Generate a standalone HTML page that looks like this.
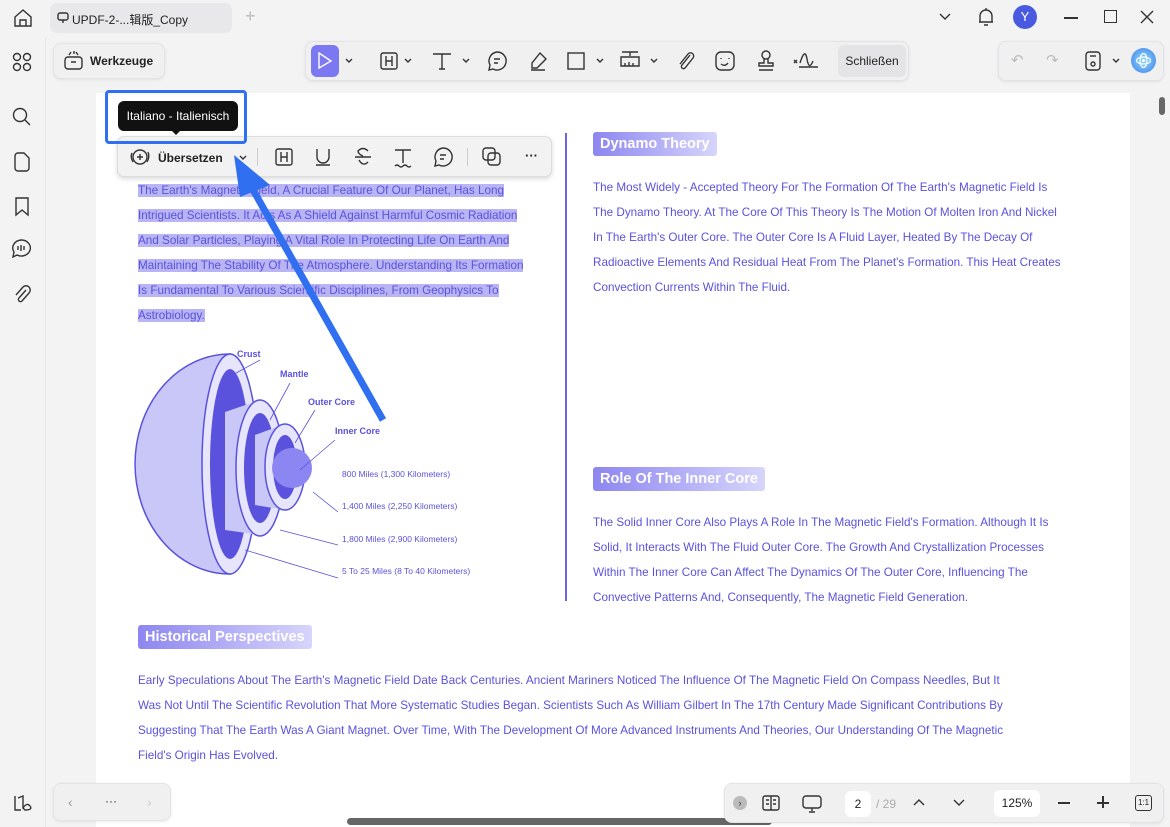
<!DOCTYPE html>
<html><head><meta charset="utf-8"><style>
*{box-sizing:border-box;margin:0;padding:0}
body{width:1170px;height:827px;overflow:hidden;background:#f3f3f4;font-family:"Liberation Sans","Noto Sans CJK SC",sans-serif;position:relative}
.a{position:absolute}
.t{color:#5a52dc;font-size:11.7px;line-height:25px;white-space:nowrap}
.hl span{background:#b9b5f4}
.h{background:linear-gradient(90deg,#8d86f0,#d7d5fb);color:#fff;font-weight:bold;font-size:14.5px;padding:4px 7px;border-radius:3px}
svg{overflow:visible}
.ic{stroke:#333;fill:none;stroke-width:1.4}
.tb{background:#f0f0f1;border:1px solid #e3e3e5;border-radius:8px;box-shadow:0 1px 3px rgba(0,0,0,.08)}
</style></head><body>
<svg class="a" style="left:13px;top:8px" width="20" height="20"><path class="ic" d="M2 9 L10 2 L18 9 V18 H2 Z M7 18 V12 H13 V18"/></svg>
<div class="a" style="left:50px;top:3px;width:182px;height:30px;background:#e8e8ea;border-radius:7px;font-size:12px;color:#222;padding:8px 0 0 22px">UPDF-2-...辑版_Copy</div>
<svg class="a" style="left:57px;top:12px" width="12" height="12"><rect class="ic" x="1" y="1" width="10" height="7" rx="2"/><path class="ic" d="M6 8V11"/></svg>
<div class="a" style="left:245px;top:6px;font-size:18px;color:#bbb">+</div>
<svg class="a" style="left:939px;top:13px" width="12" height="8"><path class="ic" d="M1 1L6 6L11 1"/></svg>
<svg class="a" style="left:977px;top:7px" width="18" height="20"><path class="ic" d="M3 15 V9 a6 6 0 0 1 12 0 V15 H2 H16 M7 18 H11 M9 1V3"/></svg>
<div class="a" style="left:1013px;top:5px;width:24px;height:24px;border-radius:50%;background:#4a5ae0;color:#fff;font-size:13px;text-align:center;line-height:24px">Y</div>
<div class="a" style="left:1064px;top:17px;width:14px;height:1.5px;background:#333"></div>
<div class="a" style="left:1104px;top:10px;width:13px;height:13px;border:1.4px solid #333"></div>
<svg class="a" style="left:1140px;top:10px" width="14" height="14"><path class="ic" d="M1 1L13 13M13 1L1 13"/></svg>
<div class="a" style="left:0;top:38px;width:46px;height:789px;background:#f3f3f4;border-right:1px solid #e6e6e8"></div>
<svg class="a" style="left:12px;top:52px" width="22" height="20"><circle class="ic" cx="5" cy="5" r="3.5"/><circle class="ic" cx="15" cy="5" r="3.5"/><circle class="ic" cx="5" cy="15" r="3.5"/><circle class="ic" cx="15" cy="15" r="3.5"/></svg>
<svg class="a" style="left:12px;top:107px" width="20" height="20"><circle class="ic" cx="8" cy="8" r="6.5"/><path class="ic" d="M13 13L18 18"/></svg>
<svg class="a" style="left:14px;top:152px" width="16" height="20"><path class="ic" d="M1 4a3 3 0 0 1 3-3H10L15 6V16a3 3 0 0 1-3 3H4a3 3 0 0 1-3-3Z"/></svg>
<svg class="a" style="left:14px;top:197px" width="16" height="20"><path class="ic" d="M2 1H14V18L8 13L2 18Z"/></svg>
<svg class="a" style="left:11px;top:239px" width="22" height="20"><path class="ic" d="M10 1a9 8 0 1 1-4 15L2 18L3 13A9 8 0 0 1 10 1Z M7 7V11M10 6V12M13 7V11"/></svg>
<svg class="a" style="left:14px;top:284px" width="16" height="20"><path class="ic" d="M12 6L5 14a2 2 0 0 0 3 3L15 9a4 4 0 0 0-6-6L2 11"/></svg>
<svg class="a" style="left:13px;top:794px" width="20" height="18"><path class="ic" d="M2 2V16H8M5 4L10 2V14M10 14Q14 8 17 12T12 16Z"/></svg>
<div class="a tb" style="left:53px;top:43px;width:112px;height:36px"></div>
<svg class="a" style="left:63px;top:50px" width="22" height="22"><rect class="ic" x="2" y="7" width="17" height="12" rx="3"/><path class="ic" d="M8 12H13M6 5L8 2M11 4V1M15 5L13 2"/></svg>
<div class="a" style="left:90px;top:54px;font-size:12px;font-weight:bold;color:#222">Werkzeuge</div>
<div class="a tb" style="left:305px;top:41px;width:604px;height:40px"></div>
<div class="a" style="left:311px;top:45px;width:28px;height:32px;background:#7b78f2;border-radius:6px"></div>
<svg class="a" style="left:317px;top:52px" width="16" height="18"><path d="M2 1L14 9L2 16Z" fill="none" stroke="#fff" stroke-width="1.4"/></svg>
<svg class="a" style="left:345px;top:58px" width="8" height="5"><path class="ic" d="M1 1L4 4L7 1" stroke-width="1"/></svg>
<svg class="a" style="left:380px;top:52px" width="18" height="18"><rect class="ic" x="1" y="1" width="16" height="16" rx="2"/><path class="ic" d="M6 4V14M12 4V14M6 9H12"/></svg>
<svg class="a" style="left:404px;top:58px" width="8" height="5"><path class="ic" d="M1 1L4 4L7 1" stroke-width="1"/></svg>
<svg class="a" style="left:432px;top:52px" width="20" height="18"><path class="ic" d="M1 2H19M10 2V17M7 17H13"/></svg>
<svg class="a" style="left:462px;top:58px" width="8" height="5"><path class="ic" d="M1 1L4 4L7 1" stroke-width="1"/></svg>
<svg class="a" style="left:487px;top:51px" width="20" height="20"><path class="ic" d="M10 1a9 9 0 1 1-4 17L2 19L3 14A9 9 0 0 1 10 1Z M7 8H13M7 12H11"/></svg>
<svg class="a" style="left:528px;top:51px" width="20" height="20"><path class="ic" d="M12 2L18 8L9 17H4V12Z M3 19H17"/></svg>
<svg class="a" style="left:567px;top:52px" width="18" height="18"><rect class="ic" x="1" y="1" width="16" height="16"/></svg>
<svg class="a" style="left:596px;top:58px" width="8" height="5"><path class="ic" d="M1 1L4 4L7 1" stroke-width="1"/></svg>
<svg class="a" style="left:620px;top:51px" width="20" height="20"><path class="ic" d="M2 1H18M10 1V5M1 6H19V15H1Z M5 12V15M9 11V15M13 12V15"/></svg>
<svg class="a" style="left:650px;top:58px" width="8" height="5"><path class="ic" d="M1 1L4 4L7 1" stroke-width="1"/></svg>
<svg class="a" style="left:676px;top:51px" width="20" height="20"><path class="ic" d="M14 4L6 14a2 2 0 0 0 3 3L17 7a3 3 0 0 0-5-4L4 13"/></svg>
<svg class="a" style="left:715px;top:51px" width="20" height="20"><rect class="ic" x="1" y="1" width="18" height="18" rx="5"/><path class="ic" d="M6 7V8M14 7V8M6 13Q10 16 13 12"/></svg>
<svg class="a" style="left:756px;top:50px" width="20" height="22"><circle class="ic" cx="10" cy="5" r="4"/><path class="ic" d="M8 9V13H3V16H17V13H12V9M3 20H17"/></svg>
<svg class="a" style="left:793px;top:51px" width="26" height="20"><path class="ic" d="M1 9L4 12M4 9L1 12M7 12Q12 -4 14 8T20 10M6 16H25" stroke-width="1.1"/></svg>
<div class="a" style="left:838px;top:45px;width:68px;height:32px;background:#e4e4e6;border-radius:6px;font-size:12px;color:#222;text-align:center;line-height:32px">Schließen</div>
<div class="a tb" style="left:998px;top:41px;width:166px;height:40px"></div>
<div class="a" style="left:1011px;top:51px;font-size:15px;color:#bbb">↶</div>
<div class="a" style="left:1046px;top:51px;font-size:15px;color:#bbb">↷</div>
<svg class="a" style="left:1085px;top:51px" width="16" height="20"><rect class="ic" x="1" y="1" width="14" height="18" rx="3"/><circle class="ic" cx="8" cy="13" r="2"/><path class="ic" d="M5 5H11"/></svg>
<svg class="a" style="left:1112px;top:58px" width="8" height="5"><path class="ic" d="M1 1L4 4L7 1" stroke-width="1"/></svg>
<div class="a" style="left:1131px;top:48px;width:25px;height:25px;border-radius:50%;background:radial-gradient(#8fdcff,#3d7de8)"></div>
<svg class="a" style="left:1135px;top:52px" width="17" height="17"><ellipse cx="8.5" cy="8.5" rx="7" ry="3.5" fill="none" stroke="#fff" stroke-width="1.2"/><ellipse cx="8.5" cy="8.5" rx="3.5" ry="7" fill="none" stroke="#fff" stroke-width="1.2"/><circle cx="8.5" cy="8.5" r="1.5" fill="#fff"/></svg>
<div class="a" style="left:96px;top:93px;width:1034px;height:734px;background:#fff"></div>
<div class="a" style="left:1159px;top:97px;width:6px;height:18px;background:#666;border-radius:3px"></div>
<div class="a" style="left:565px;top:133px;width:1.5px;height:468px;background:#6b63e0"></div>
<div class="a t hl" style="left:138px;top:178px"><span>The Earth's Magnetic Field, A Crucial Feature Of Our Planet, Has Long</span><br><span>Intrigued Scientists. It Acts As A Shield Against Harmful Cosmic Radiation</span><br><span>And Solar Particles, Playing A Vital Role In Protecting Life On Earth And</span><br><span>Maintaining The Stability Of The Atmosphere. Understanding Its Formation</span><br><span>Is Fundamental To Various Scientific Disciplines, From Geophysics To</span><br><span>Astrobiology.</span></div>
<svg class="a" style="left:130px;top:340px" width="380" height="250">
<path d="M100 14 A95 110 0 0 0 100 234 Z" fill="#c9c7f7" stroke="#5a52dc" stroke-width="1.5"/>
<ellipse cx="100" cy="124" rx="28" ry="110" fill="#e6e5fc" stroke="#5a52dc" stroke-width="1.5"/>
<ellipse cx="100" cy="124" rx="20" ry="95" fill="#5a52dc"/>
<path d="M95 72 L130 60 V195 L95 190 Z" fill="#c9c7f7"/>
<ellipse cx="130" cy="128" rx="24" ry="68" fill="#e6e5fc" stroke="#5a52dc" stroke-width="1.5"/>
<ellipse cx="130" cy="128" rx="16" ry="55" fill="#5a52dc"/>
<path d="M125 95 L155 84 V170 L125 165 Z" fill="#c9c7f7"/>
<ellipse cx="155" cy="127" rx="20" ry="43" fill="#e6e5fc" stroke="#5a52dc" stroke-width="1.5"/>
<ellipse cx="155" cy="127" rx="12" ry="32" fill="#5a52dc"/>
<circle cx="162" cy="128" r="20" fill="#8c86f2"/>
<path d="M97 38L130 20M140 80L160 43M165 103L185 70M170 130L205 100M183 152L208 172M150 190L208 205M115 210L208 238" stroke="#5a52dc" stroke-width=".8" fill="none"/>
<text x="107" y="17" font-size="9" font-weight="bold" fill="#5a52dc" font-family="Liberation Sans">Crust</text>
<text x="150" y="37" font-size="9" font-weight="bold" fill="#5a52dc" font-family="Liberation Sans">Mantle</text>
<text x="178" y="65" font-size="9" font-weight="bold" fill="#5a52dc" font-family="Liberation Sans">Outer Core</text>
<text x="205" y="94" font-size="9" font-weight="bold" fill="#5a52dc" font-family="Liberation Sans">Inner Core</text>
<text x="212" y="137" font-size="8.5" fill="#5a52dc" font-family="Liberation Sans">800 Miles (1,300 Kilometers)</text>
<text x="212" y="169" font-size="8.5" fill="#5a52dc" font-family="Liberation Sans">1,400 Miles (2,250 Kilometers)</text>
<text x="212" y="202" font-size="8.5" fill="#5a52dc" font-family="Liberation Sans">1,800 Miles (2,900 Kilometers)</text>
<text x="212" y="234" font-size="8.5" fill="#5a52dc" font-family="Liberation Sans">5 To 25 Miles (8 To 40 Kilometers)</text>
</svg>
<div class="a h" style="left:593px;top:132px">Dynamo Theory</div>
<div class="a t" style="left:593px;top:175px">The Most Widely - Accepted Theory For The Formation Of The Earth's Magnetic Field Is<br>The Dynamo Theory. At The Core Of This Theory Is The Motion Of Molten Iron And Nickel<br>In The Earth's Outer Core. The Outer Core Is A Fluid Layer, Heated By The Decay Of<br>Radioactive Elements And Residual Heat From The Planet's Formation. This Heat Creates<br>Convection Currents Within The Fluid.</div>
<div class="a h" style="left:593px;top:467px">Role Of The Inner Core</div>
<div class="a t" style="left:593px;top:510px">The Solid Inner Core Also Plays A Role In The Magnetic Field's Formation. Although It Is<br>Solid, It Interacts With The Fluid Outer Core. The Growth And Crystallization Processes<br>Within The Inner Core Can Affect The Dynamics Of The Outer Core, Influencing The<br>Convective Patterns And, Consequently, The Magnetic Field Generation.</div>
<div class="a h" style="left:138px;top:625px">Historical Perspectives</div>
<div class="a t" style="left:138px;top:668px">Early Speculations About The Earth's Magnetic Field Date Back Centuries. Ancient Mariners Noticed The Influence Of The Magnetic Field On Compass Needles, But It<br>Was Not Until The Scientific Revolution That More Systematic Studies Began. Scientists Such As William Gilbert In The 17th Century Made Significant Contributions By<br>Suggesting That The Earth Was A Giant Magnet. Over Time, With The Development Of More Advanced Instruments And Theories, Our Understanding Of The Magnetic<br>Field's Origin Has Evolved.</div>
<div class="a" style="left:117px;top:136px;width:435px;height:41px;background:#f2f2f3;border:1px solid #ddd;border-radius:7px;box-shadow:0 2px 5px rgba(0,0,0,.15)"></div>
<svg class="a" style="left:129px;top:147px" width="22" height="20"><circle class="ic" cx="11" cy="10" r="7"/><path class="ic" d="M3 6Q1 10 4 15M19 5Q21 10 18 15M11 7V13M8 10H14"/></svg>
<div class="a" style="left:158px;top:151px;font-size:12px;font-weight:bold;color:#222">Übersetzen</div>
<svg class="a" style="left:239px;top:155px" width="8" height="5"><path class="ic" d="M1 1L4 4L7 1" stroke-width="1"/></svg>
<div class="a" style="left:257px;top:148px;width:1px;height:18px;background:#ccc"></div>
<svg class="a" style="left:275px;top:148px" width="18" height="18"><rect class="ic" x="1" y="1" width="16" height="16" rx="2"/><path class="ic" d="M6 4V14M12 4V14M6 9H12"/></svg>
<svg class="a" style="left:314px;top:148px" width="18" height="18"><path class="ic" d="M3 1V9a6 6 0 0 0 12 0V1M2 17H16"/></svg>
<svg class="a" style="left:354px;top:147px" width="18" height="20"><path class="ic" d="M14 4Q9 -1 4 4Q4 7 9 9M1 10H17M5 13Q9 20 14 15"/></svg>
<svg class="a" style="left:394px;top:148px" width="18" height="20"><path class="ic" d="M1 2H17M9 2V15M1 18Q3 16 5 18T9 18T13 18T17 18"/></svg>
<svg class="a" style="left:433px;top:147px" width="20" height="20"><path class="ic" d="M10 1a9 9 0 1 1-4 17L2 19L3 14A9 9 0 0 1 10 1Z M7 8H13M7 12H11"/></svg>
<div class="a" style="left:467px;top:148px;width:1px;height:18px;background:#ccc"></div>
<svg class="a" style="left:482px;top:147px" width="20" height="20"><rect class="ic" x="1" y="1" width="12" height="12" rx="3"/><rect class="ic" x="6" y="6" width="12" height="12" rx="3" fill="#f2f2f3"/></svg>
<div class="a" style="left:525px;top:148px;font-size:13px;color:#222;font-weight:bold">···</div>
<div class="a" style="left:105px;top:90px;width:142px;height:54px;border:3px solid #2f6ff0;border-radius:4px"></div>
<div class="a" style="left:118px;top:101px;width:120px;height:30px;background:#111;border-radius:6px;color:#fff;font-size:12px;text-align:center;line-height:30px">Italiano - Italienisch</div>
<div class="a" style="left:171px;top:130px;width:0;height:0;border:5px solid transparent;border-top-color:#111"></div>
<svg class="a" style="left:0;top:0" width="1170" height="827"><path d="M383 420 L252 188" stroke="#2f6ff0" stroke-width="7"/><path d="M234 155 L270 185 L240 197 Z" fill="#2f6ff0"/></svg>
<div class="a tb" style="left:53px;top:783px;width:118px;height:38px"></div>
<div class="a" style="left:68px;top:794px;font-size:14px;color:#999">‹</div>
<div class="a" style="left:105px;top:794px;font-size:12px;color:#333">···</div>
<div class="a" style="left:147px;top:794px;font-size:14px;color:#ccc">›</div>
<div class="a" style="left:347px;top:818px;width:425px;height:7px;background:#666;border-radius:4px"></div>
<div class="a tb" style="left:724px;top:783px;width:440px;height:40px"></div>
<div class="a" style="left:733px;top:796px;width:14px;height:14px;border-radius:50%;background:#bbb;font-size:9px;text-align:center;line-height:14px;color:#333">›</div>
<svg class="a" style="left:762px;top:795px" width="18" height="16"><rect class="ic" x="1" y="1" width="16" height="14" rx="2"/><path class="ic" d="M9 1V15M4 5H7M4 9H7M11 5H14M11 9H14" stroke-width="1"/></svg>
<svg class="a" style="left:802px;top:795px" width="20" height="18"><rect class="ic" x="1" y="1" width="18" height="12" rx="3"/><path class="ic" d="M10 13V16M7 17H13"/></svg>
<div class="a" style="left:845px;top:791px;width:26px;height:26px;background:#fff;border-radius:6px;font-size:12px;text-align:center;line-height:26px;color:#222">2</div>
<div class="a" style="left:876px;top:797px;font-size:12px;color:#aaa">/ 29</div>
<svg class="a" style="left:913px;top:798px" width="12" height="8"><path class="ic" d="M1 7L6 2L11 7"/></svg>
<svg class="a" style="left:953px;top:799px" width="12" height="8"><path class="ic" d="M1 1L6 6L11 1"/></svg>
<div class="a" style="left:994px;top:790px;width:46px;height:27px;background:#fff;border-radius:6px;font-size:12px;text-align:center;line-height:27px;color:#222">125%</div>
<div class="a" style="left:1058px;top:802px;width:12px;height:1.5px;background:#333"></div>
<div class="a" style="left:1097px;top:802px;width:12px;height:1.5px;background:#333"></div>
<div class="a" style="left:1102px;top:796px;width:1.5px;height:12px;background:#333"></div>
<div class="a" style="left:1135px;top:795px;width:17px;height:16px;border:1.3px solid #333;border-radius:3px;font-size:8px;text-align:center;line-height:14px;color:#222">1:1</div>
</body></html>
